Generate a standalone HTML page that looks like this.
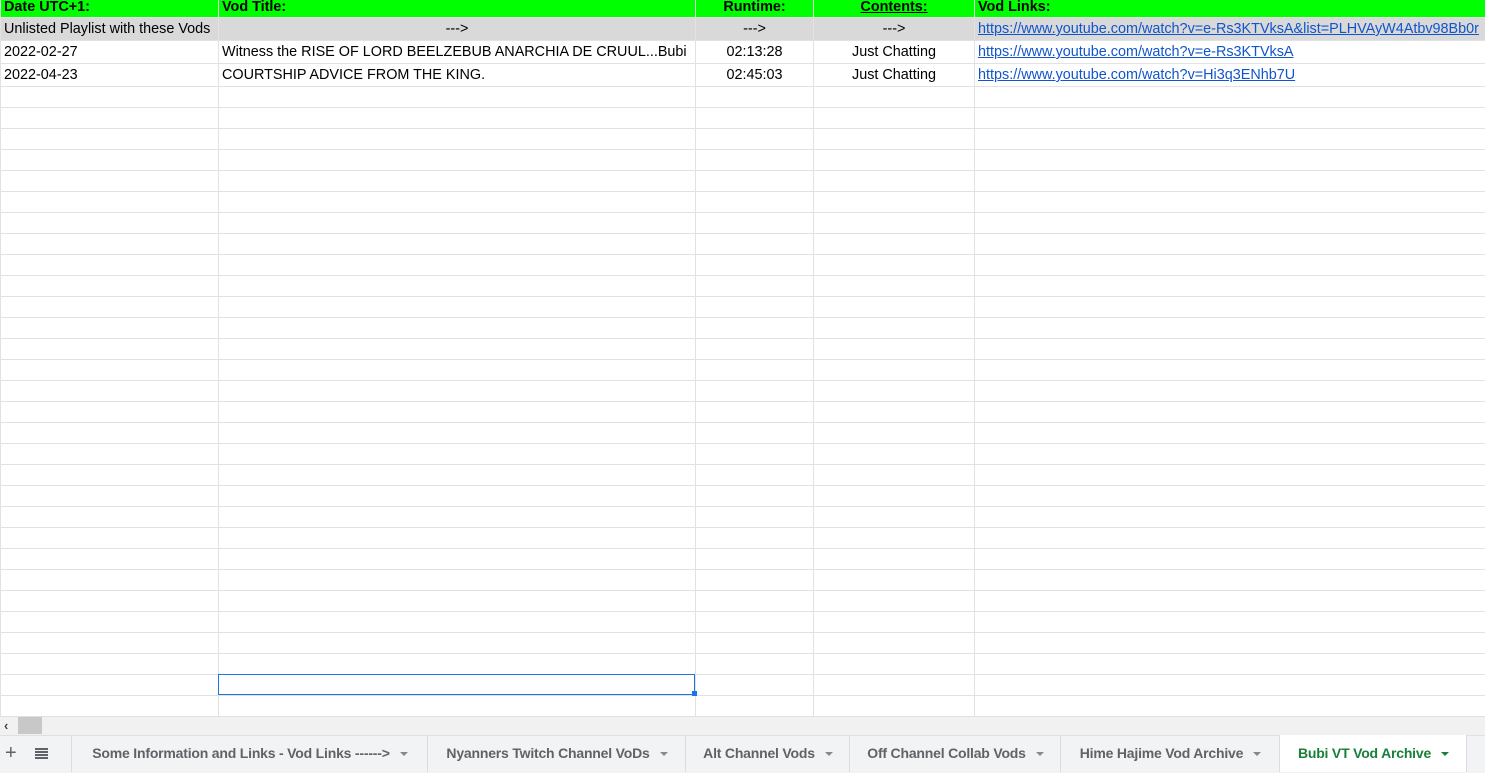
<!DOCTYPE html><html><head><style>
body{margin:0;width:1485px;height:772px;overflow:hidden;background:#fff;font-family:"Liberation Sans",Arial,sans-serif;font-size:14.4px;position:relative}
.a{position:absolute;white-space:nowrap;overflow:hidden}
.h{position:absolute;left:0;width:1485px;height:1px;background:#e2e2e2}
.v{position:absolute;top:0;width:1px;height:716px;background:#e2e2e2}
.c{position:absolute;line-height:25px;height:23px;color:#000}
a{color:#1155cc;text-decoration:underline}
.tab{position:absolute;top:735px;height:37px;line-height:37px;font-family:"Liberation Sans",sans-serif;font-weight:bold;font-size:14px;color:#5f6368;border-left:1px solid #dadce0;text-align:center;letter-spacing:-0.2px}
.tab span.ar{display:inline-block;width:0;height:0;border-left:4px solid transparent;border-right:4px solid transparent;border-top:4px solid #888;margin-left:10px;vertical-align:middle}
</style></head><body>
<div class="a" style="left:0;top:0;width:1485px;height:17px;background:#00ff00"></div>
<div class="a" style="left:0;top:17px;width:1485px;height:23px;background:#d9d9d9"></div>
<div class="v" style="left:0"></div>
<div class="v" style="left:218px"></div>
<div class="v" style="left:695px"></div>
<div class="v" style="left:813px"></div>
<div class="v" style="left:974px"></div>
<div class="h" style="top:17px"></div><div class="h" style="top:40px"></div><div class="h" style="top:63px"></div><div class="h" style="top:86px"></div>
<div id="rows"></div>
<script>
var s='';for(var y=107;y<=716;y+=21)s+='<div class="h" style="top:'+y+'px"></div>';document.getElementById('rows').innerHTML=s;
</script>
<div class="c" style="left:4px;top:-5px;font-weight:bold">Date UTC+1:</div>
<div class="c" style="left:222px;top:-5px;font-weight:bold">Vod Title:</div>
<div class="c" style="left:696px;width:117px;text-align:center;top:-5px;font-weight:bold">Runtime:</div>
<div class="c" style="left:814px;width:160px;text-align:center;top:-5px;font-weight:bold;text-decoration:underline">Contents:</div>
<div class="c" style="left:978px;top:-5px;font-weight:bold">Vod Links:</div>

<div class="c" style="left:4px;top:17px">Unlisted Playlist with these Vods</div>
<div class="c" style="left:219px;width:476px;text-align:center;top:17px">---&gt;</div>
<div class="c" style="left:696px;width:117px;text-align:center;top:17px">---&gt;</div>
<div class="c" style="left:814px;width:160px;text-align:center;top:17px">---&gt;</div>
<div class="c a" style="left:978px;width:507px;top:17px"><a>https://www.youtube.com/watch?v=e-Rs3KTVksA&amp;list=PLHVAyW4Atbv98Bb0r</a></div>

<div class="c" style="left:4px;top:40px">2022-02-27</div>
<div class="c a" style="left:222px;width:473px;top:40px">Witness the RISE OF LORD BEELZEBUB ANARCHIA DE CRUUL...Bubi</div>
<div class="c" style="left:696px;width:117px;text-align:center;top:40px">02:13:28</div>
<div class="c" style="left:814px;width:160px;text-align:center;top:40px">Just Chatting</div>
<div class="c" style="left:978px;top:40px"><a>https://www.youtube.com/watch?v=e-Rs3KTVksA</a></div>

<div class="c" style="left:4px;top:63px">2022-04-23</div>
<div class="c" style="left:222px;top:63px">COURTSHIP ADVICE FROM THE KING.</div>
<div class="c" style="left:696px;width:117px;text-align:center;top:63px">02:45:03</div>
<div class="c" style="left:814px;width:160px;text-align:center;top:63px">Just Chatting</div>
<div class="c" style="left:978px;top:63px"><a>https://www.youtube.com/watch?v=Hi3q3ENhb7U</a></div>

<div class="a" style="left:218px;top:674px;width:475px;height:19px;border:1px solid #1a73e8"></div>
<div class="a" style="left:692px;top:691px;width:5px;height:5px;background:#1a73e8"></div>

<div class="a" style="left:0;top:716px;width:1485px;height:19px;background:#f1f1f1;border-top:1px solid #e0e0e0"></div>
<div class="a" style="left:18px;top:717px;width:24px;height:17px;background:#c8c8c8"></div>
<div class="a" style="left:4px;top:716px;font-size:13px;line-height:19px;color:#444;font-weight:bold">&lsaquo;</div>
<div class="a" style="left:0;top:735px;width:1485px;height:37px;background:#f1f3f4;border-top:1px solid #e0e0e0"></div>
<div class="a" style="left:5px;top:735px;line-height:37px;font-size:20px;color:#5f6368">+</div>
<div class="a" style="left:35px;top:748px;width:13px;height:2px;background:#5f6368;box-shadow:0 3px 0 #5f6368,0 6px 0 #5f6368,0 9px 0 #5f6368"></div>
<div class="tab" style="left:71px;width:356px">Some Information and Links - Vod Links ------&gt;<span class="ar"></span></div>
<div class="tab" style="left:427px;width:258px">Nyanners Twitch Channel VoDs<span class="ar"></span></div>
<div class="tab" style="left:685px;width:164px">Alt Channel Vods<span class="ar"></span></div>
<div class="tab" style="left:849px;width:211px">Off Channel Collab Vods<span class="ar"></span></div>
<div class="tab" style="left:1060px;width:219px">Hime Hajime Vod Archive<span class="ar"></span></div>
<div class="tab" style="left:1279px;width:187px;background:#fff;color:#188038">Bubi VT Vod Archive<span class="ar" style="border-top-color:#188038"></span></div>
<div class="tab" style="left:1466px;width:19px"></div>
</body></html>
